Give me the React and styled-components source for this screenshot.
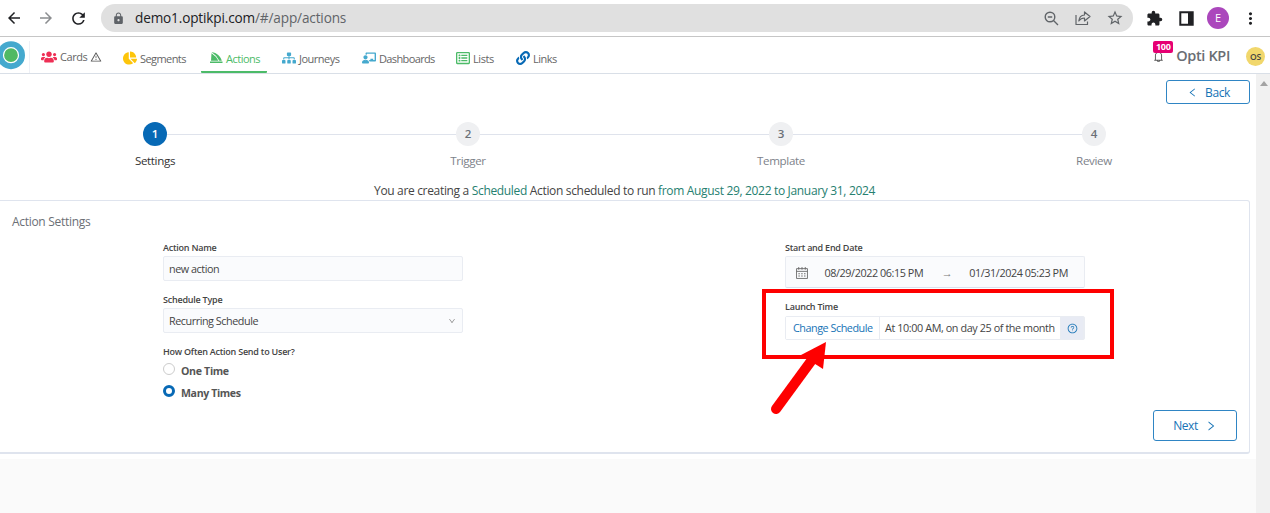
import React from 'react';
import styled, { createGlobalStyle } from 'styled-components';
import { FaUsers, FaChartPie, FaSitemap, FaChalkboardTeacher, FaRegListAlt, FaLink } from 'react-icons/fa';
import { MdArrowBack, MdArrowForward, MdRefresh, MdLock, MdStarBorder, MdExtension, MdMoreVert } from 'react-icons/md';
import { AiOutlineWarning, AiOutlineBell, AiOutlineLeft, AiOutlineRight, AiOutlineDown, AiOutlineQuestionCircle } from 'react-icons/ai';

const Global = createGlobalStyle`
  * { box-sizing: border-box; }
  body { margin: 0; background: #fafafa; overflow: hidden; font-family: "Open Sans", "Noto Sans", sans-serif; }
  svg { display: block; flex: none; }
`;

const Page = styled.div`
  position: relative;
  width: 1270px;
  height: 513px;
  overflow: hidden;
  display: flex;
  flex-direction: column;
`;

const Label = styled.span`
  display: block;
  white-space: nowrap;
  font-size: ${(p) => p.$size || 11}px;
  line-height: 16px;
  font-weight: ${(p) => p.$weight || 400};
  letter-spacing: ${(p) => p.$track || 0}px;
  color: ${(p) => p.$color || '#444'};
`;

/* Browser chrome */
const BrowserBar = styled.header`
  flex: none;
  height: 37px;
  padding: 0 7px 0 5px;
  display: flex;
  align-items: center;
  background: #fff;
  border-bottom: 1px solid #c6c6c6;
`;
const BrowserButton = styled.span`
  flex: none;
  width: ${(p) => p.$w || 32}px;
  display: flex;
  justify-content: center;
  color: ${(p) => p.$color || '#202124'};
`;
const AddressBar = styled.div`
  flex: none;
  width: 1032px;
  height: 28px;
  border-radius: 14px;
  background: #e0e0e0;
  display: flex;
  align-items: center;
  padding: 0 2px 0 11px;
`;
const Url = styled.div`
  flex: 1;
  padding-left: 10px;
  font-size: 13.6px;
  line-height: 20px;
  letter-spacing: -0.15px;
  color: #606468;
  b { font-weight: 400; color: #202124; }
`;
const Profile = styled.div`
  flex: none;
  width: 22px;
  height: 22px;
  margin: 0 10px 0 11px;
  border-radius: 50%;
  background: #ab47bc;
  color: #fff;
  font-size: 11px;
  line-height: 22px;
  text-align: center;
`;

/* Application navigation */
const Nav = styled.nav`
  flex: none;
  height: 37px;
  padding-top: 1px;
  display: flex;
  align-items: stretch;
  background: #fff;
  border-bottom: 1px solid #d9dfe7;
`;
const Logo = styled.div`
  width: 30px;
  border-right: 1px solid #eef0f6;
  margin-top: 3px;
  svg { margin: 0 0 0 -3px; }
`;
const NavItem = styled.div`
  width: ${(p) => p.$w}px;
  margin-left: ${(p) => p.$gap}px;
  padding: ${(p) => p.$top || 6}px 0 0 ${(p) => p.$pad || 0}px;
  display: flex;
  align-items: center;
  gap: 3px;
  color: ${(p) => p.$color};
  border-bottom: ${(p) => (p.$active ? '2px solid #4cbb68' : '2px solid transparent')};
  border-radius: 1px;
`;
const NavText = styled(Label)`
  line-height: 14px;
  padding-top: ${(p) => p.$drop}px;
`;
const NavEnd = styled.div`
  margin-left: auto;
  padding: 1px 5px 0 0;
  display: flex;
  align-items: center;
`;
const BellBox = styled.div`
  position: relative;
  margin-right: 11px;
  padding-top: 1px;
  color: #555;
`;
const Badge = styled.span`
  position: absolute;
  left: 1px;
  top: -8px;
  width: 20px;
  height: 12px;
  border-radius: 2px;
  background: #e60073;
  color: #fff;
  font-size: 9px;
  letter-spacing: -0.3px;
  font-weight: 700;
  line-height: 12px;
  text-align: center;
`;
const Avatar = styled.div`
  width: 19px;
  height: 19px;
  margin-left: 16px;
  border-radius: 50%;
  background: #f1d76c;
  color: #444;
  font-size: 8.5px;
  letter-spacing: -0.2px;
  font-weight: 600;
  line-height: 19px;
  text-align: center;
`;

/* Work area */
const Body = styled.div`
  flex: 1;
  display: flex;
`;
const Main = styled.main`
  width: 1256px;
  height: 385px;
  background: #fff;
  padding-right: 6px;
`;
const Scrollbar = styled.div`
  flex: 1;
  background: #f1f1f1;
  padding: 7px 0 0 4px;
`;
const TopRow = styled.div`
  display: flex;
  justify-content: flex-end;
  padding-top: 6px;
`;
const OutlineButton = styled.button`
  width: 84px;
  height: ${(p) => p.$h}px;
  padding: 1px 0 0 ${(p) => p.$shift || 0}px;
  display: flex;
  align-items: center;
  justify-content: center;
  gap: ${(p) => p.$gap}px;
  background: #fff;
  border: 1px solid #2f85c4;
  border-radius: 3px;
  color: #1673b6;
  font-family: inherit;
`;
const Steps = styled.div`
  display: flex;
  align-items: flex-start;
  margin: 18px 0 0 105px;
`;
const Step = styled.div`
  width: 100px;
  display: flex;
  flex-direction: column;
  align-items: center;
  gap: 7px;
`;
const StepDot = styled.span`
  width: 24px;
  height: 24px;
  border-radius: 50%;
  background: ${(p) => (p.$active ? '#0769b5' : '#eff0f2')};
  color: ${(p) => (p.$active ? '#fff' : '#6b7078')};
  font-size: 11.5px;
  font-weight: 600;
  line-height: 24px;
  text-align: center;
`;
const StepLine = styled.span`
  width: 289px;
  height: 1px;
  margin: 12px -38px 0;
  background: #dfe3ec;
`;
const Summary = styled.p`
  margin: 14px 0 0 374px;
  font-size: 12px;
  line-height: 16px;
  letter-spacing: -0.33px;
  white-space: nowrap;
  color: #444;
  em { font-style: normal; color: #268070; }
`;
const Card = styled.section`
  height: 254px;
  margin-top: 1px;
  padding: 13px 12px 11px;
  display: flex;
  flex-direction: column;
  border: 1px solid #dfe4ee;
  border-left: 0;
  border-bottom-width: 2px;
  border-radius: 0 3px 3px 0;
`;
const Form = styled.div`
  display: flex;
  justify-content: space-between;
  padding: 10px 152px 0 151px;
`;
const Column = styled.div`
  width: 300px;
`;
const FieldLabel = styled(Label)`
  font-size: 9px;
  font-weight: 600;
  line-height: 15px;
  letter-spacing: -0.23px;
`;
const Control = styled.div`
  height: ${(p) => p.$h || 25}px;
  margin: 1px 0 11px;
  padding: 0 6px;
  display: flex;
  align-items: center;
  justify-content: space-between;
  background: #fafbfd;
  border: 1px solid #e9ecf2;
  border-radius: 2px;
  color: #888;
`;
const ControlText = styled(Label)`
  margin-left: -1px;
  font-size: ${(p) => p.$size || 10.8}px;
  letter-spacing: ${(p) => p.$track || -0.45}px;
`;
const DateControl = styled(Control)`
  padding: 1px 16px 0 10px;
  border-bottom-color: #d9e0ee;
`;
const DateArrow = styled(Label)`
  margin-left: 1px;
  font-family: "Liberation Sans", sans-serif;
`;
const ScheduleControl = styled(Control)`
  margin-top: 2px;
  padding: 0;
  justify-content: flex-start;
  background: #fff;
`;
const Cell = styled.div`
  flex: none;
  width: ${(p) => p.$w}px;
  height: 100%;
  padding-left: ${(p) => p.$pad}px;
  display: flex;
  align-items: center;
  background: ${(p) => p.$bg || '#fff'};
  border-right: 1px solid #e9ecf2;
  color: #1673b6;
`;
const RadioGroup = styled.div`
  margin-top: 4px;
`;
const RadioRow = styled.div`
  height: 22px;
  display: flex;
  align-items: flex-start;
  gap: 6px;
`;
const Radio = styled.span`
  width: 12px;
  height: 12px;
  border-radius: 50%;
  background: #fff;
  border: ${(p) => (p.$on ? '3.6px solid #0769b5' : '1px solid #ccc')};
`;
const CardFoot = styled.div`
  margin-top: auto;
  display: flex;
  justify-content: flex-end;
`;

/* Annotation over the page */
const Highlight = styled.div`
  position: absolute;
  left: 762px;
  top: 289px;
  width: 352px;
  height: 70px;
  border: 4px solid #fe0000;
`;
const Arrow = styled.svg`
  position: absolute;
  left: 765px;
  top: 340px;
`;

const NAV = [
  { text: 'Cards', Icon: FaUsers, color: '#ee2f55', gap: 11, w: 60, top: 4, track: -0.45, drop: 1, warn: true, size: 16 },
  { text: 'Segments', Icon: FaChartPie, color: '#fdc50b', gap: 22, w: 64, track: -0.58, drop: 3, size: 14 },
  { text: 'Actions', Icon: SailIcon, color: '#4cbb68', gap: 14, w: 66, pad: 9, active: true, track: -0.5, drop: 2 },
  { text: 'Journeys', Icon: FaSitemap, color: '#45a9ce', gap: 15, w: 58, size: 14, track: -0.5, drop: 3 },
  { text: 'Dashboards', Icon: FaChalkboardTeacher, color: '#45a9ce', gap: 22, w: 72, size: 14, track: -0.63, drop: 3 },
  { text: 'Lists', Icon: FaRegListAlt, color: '#4cbb68', gap: 22, w: 38, size: 14, track: -0.4, drop: 3 },
  { text: 'Links', Icon: FaLink, color: '#0769b5', gap: 22, w: 42, size: 14, track: -0.5, drop: 3 },
];

function SailIcon() {
  return (
    <svg width="13" height="12" viewBox="0 0 13 12">
      <path d="M1.5 0C7 1 10.5 4 11.8 8.8L9.3 8.8Q6.5 3.2 1.5 0Z M1.5 1.2Q6 4 8.4 8.8L1 8.8Z M0 9.4h12.5v1.6H0Z" fill="currentColor" />
    </svg>
  );
}
function ZoomOutIcon() {
  return (
    <svg width="15" height="15" viewBox="0 0 15 15" fill="none" stroke="currentColor" strokeWidth="1.4">
      <circle cx="6" cy="6" r="4.8" />
      <path d="M9.5 9.5L14 14M3.8 6h4.4" />
    </svg>
  );
}
function ShareIcon() {
  return (
    <svg width="16" height="16" viewBox="0 0 16 16" fill="none" stroke="#606468" strokeWidth="1.2">
      <path d="M1 5v9.5h11.5v-3M9.5 2v3C6 5.2 4.2 7 3.8 11c1.5-2.2 3.2-3 5.7-3v3L15 6.5Z" strokeLinejoin="round" />
    </svg>
  );
}
function PanelIcon() {
  return (
    <svg width="15" height="15" viewBox="0 0 15 15">
      <path d="M1.3 1.3h12.4v12.4H1.3Z" fill="none" stroke="#202124" strokeWidth="2" />
      <path d="M9 1h5v13H9Z" fill="#202124" />
    </svg>
  );
}
function CalendarIcon() {
  return (
    <svg width="12" height="12" viewBox="0 0 11 11" fill="none" stroke="#666">
      <path d="M.5 1.5h10v9H.5ZM.5 4h10M2.5 0v2.5M5.5 0v2.5M8.5 0v2.5" strokeWidth=".8" />
      <path d="M2.2 6.2h7M2.2 8.3h7" strokeDasharray="1.3 1.3" />
    </svg>
  );
}

export default function App() {
  return (
    <Page>
      <Global />
      <BrowserBar>
        <BrowserButton $w={18}><MdArrowBack size={18} /></BrowserButton>
        <BrowserButton $w={46} $color="#8b8d90"><MdArrowForward size={18} /></BrowserButton>
        <BrowserButton $w={19}><MdRefresh size={19} /></BrowserButton>
        <BrowserButton $w={13} />
        <AddressBar>
          <MdLock size={13} color="#5f6368" />
          <Url><b>demo1.optikpi.com</b>/#/app/actions</Url>
          <BrowserButton $color="#606468"><ZoomOutIcon /></BrowserButton>
          <BrowserButton><ShareIcon /></BrowserButton>
          <BrowserButton $color="#606468"><MdStarBorder size={18} /></BrowserButton>
        </AddressBar>
        <BrowserButton $w={43}><MdExtension size={17} /></BrowserButton>
        <BrowserButton $w={20}><PanelIcon /></BrowserButton>
        <Profile>E</Profile>
        <BrowserButton $w={23}><MdMoreVert size={19} /></BrowserButton>
      </BrowserBar>

      <Nav>
        <Logo>
          <svg width="28" height="29" viewBox="0 0 28 29">
            <circle cx="14" cy="14.2" r="14" fill="#45a9ce" />
            <circle cx="14" cy="14.2" r="7.5" fill="#50b964" stroke="#fff" strokeWidth="1.2" />
          </svg>
        </Logo>
        {NAV.map(({ text, Icon, color, gap, w, top, pad, active, warn, size, track, drop }) => (
          <NavItem key={text} $gap={gap} $w={w} $top={top} $pad={pad} $active={active} $color={color}>
            <Icon size={size} />
            <NavText $color={active ? color : '#666'} $track={track} $drop={drop}>{text}</NavText>
            {warn && <AiOutlineWarning size={12} color="#555" />}
          </NavItem>
        ))}
        <NavEnd>
          <BellBox>
            <AiOutlineBell size={13} />
            <Badge>100</Badge>
          </BellBox>
          <Label $size={14.5} $weight={600} $color="#6a6e74" $track={-0.35}>Opti KPI</Label>
          <Avatar>OS</Avatar>
        </NavEnd>
      </Nav>

      <Body>
        <Main>
          <TopRow>
            <OutlineButton $h={24} $gap={7} $shift={1}>
              <AiOutlineLeft size={11} />
              <Label $size={12} $color="#1673b6" $track={-0.4}>Back</Label>
            </OutlineButton>
          </TopRow>
          <Steps>
            {['Settings', 'Trigger', 'Template', 'Review'].map((name, i) => (
              <React.Fragment key={name}>
                {i > 0 && <StepLine />}
                <Step>
                  <StepDot $active={i === 0}>{i + 1}</StepDot>
                  <Label $size={11.6} $track={-0.35} $color={i === 0 ? '#333' : '#7d828a'}>{name}</Label>
                </Step>
              </React.Fragment>
            ))}
          </Steps>
          <Summary>
            You are creating a <em>Scheduled</em> Action scheduled to run <em>from August 29, 2022 to January 31, 2024</em>
          </Summary>
          <Card>
            <Label $size={12} $color="#6b6f76" $track={-0.3}>Action Settings</Label>
            <Form>
              <Column>
                <FieldLabel>Action Name</FieldLabel>
                <Control><ControlText>new action</ControlText></Control>
                <FieldLabel>Schedule Type</FieldLabel>
                <Control>
                  <ControlText>Recurring Schedule</ControlText>
                  <AiOutlineDown size={8} />
                </Control>
                <FieldLabel>How Often Action Send to User?</FieldLabel>
                <RadioGroup>
                  <RadioRow><Radio /><Label $size={10.6} $weight={700} $color="#555" $track={-0.33}>One Time</Label></RadioRow>
                  <RadioRow><Radio $on /><Label $size={10.6} $weight={700} $color="#555" $track={-0.38}>Many Times</Label></RadioRow>
                </RadioGroup>
              </Column>
              <Column>
                <FieldLabel>Start and End Date</FieldLabel>
                <DateControl $h={32}>
                  <CalendarIcon />
                  <ControlText $track={-0.42}>08/29/2022 06:15 PM</ControlText>
                  <DateArrow $color="#777">→</DateArrow>
                  <ControlText $track={-0.42}>01/31/2024 05:23 PM</ControlText>
                </DateControl>
                <FieldLabel>Launch Time</FieldLabel>
                <ScheduleControl $h={24}>
                  <Cell $w={94} $pad={8}><ControlText $color="#1673b6" $track={-0.47}>Change Schedule</ControlText></Cell>
                  <Cell $w={181} $pad={6}><ControlText $track={-0.4}>At 10:00 AM, on day 25 of the month</ControlText></Cell>
                  <Cell $w={23} $pad={6} $bg="#e8ebf4"><AiOutlineQuestionCircle size={11} /></Cell>
                </ScheduleControl>
              </Column>
            </Form>
            <CardFoot>
              <OutlineButton $h={31} $gap={7}>
                <Label $size={12} $color="#1673b6" $track={-0.4}>Next</Label>
                <AiOutlineRight size={12} />
              </OutlineButton>
            </CardFoot>
          </Card>
        </Main>
        <Scrollbar>
          <svg width="8" height="5" viewBox="0 0 8 5"><path d="M0 5L4 0L8 5Z" fill="#a3a3a3" /></svg>
        </Scrollbar>
      </Body>

      <Highlight />
      <Arrow width="70" height="80" viewBox="0 0 70 80">
        <path d="M11 69L52 13" stroke="#fe0000" strokeWidth="10" strokeLinecap="round" />
        <path d="M61 2L36 15L58 29Z" fill="#fe0000" />
      </Arrow>
    </Page>
  );
}
